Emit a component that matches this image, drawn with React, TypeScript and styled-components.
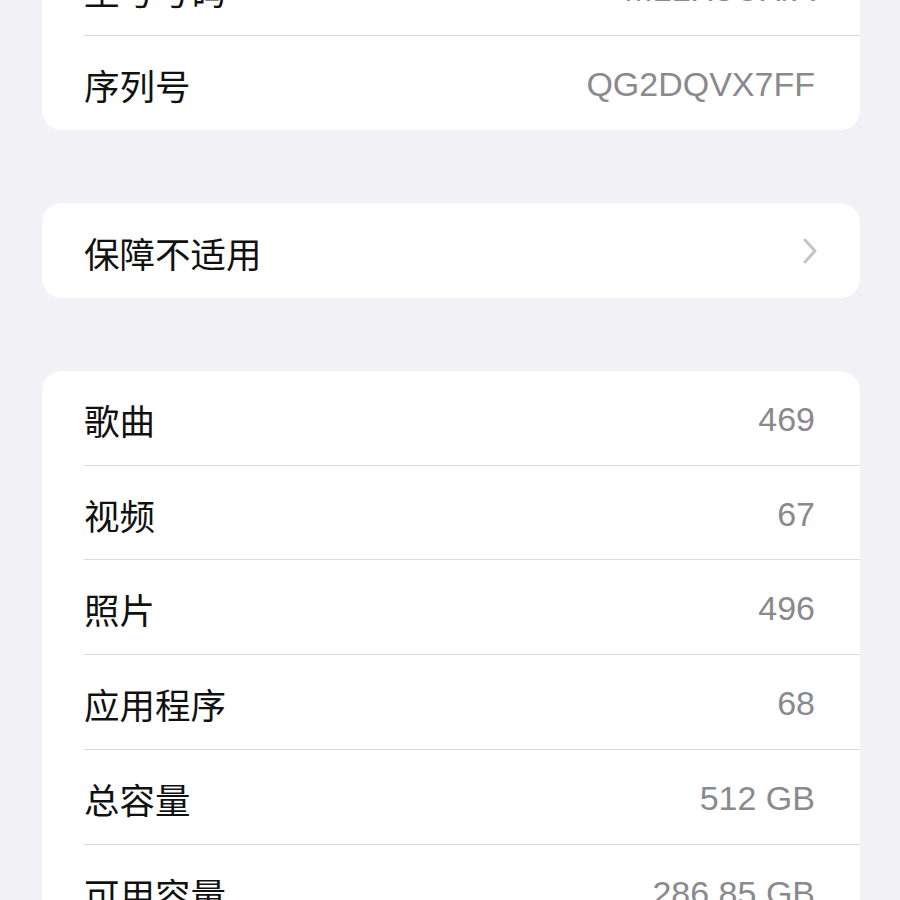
import React from 'react';
import styled, { createGlobalStyle } from 'styled-components';

const GlobalStyle = createGlobalStyle`
    html, body {
        margin: 0;
        padding: 0;
        background: #f2f1f6;
        overflow: hidden;
    }
`;

const Page = styled.div`
    width: 900px;
    height: 900px;
    overflow: hidden;
    background: #f2f1f6;
    font-family: 'Liberation Sans', 'Noto Sans CJK SC', sans-serif;
`;

const Scroll = styled.div`
    display: flex;
    flex-direction: column;
    gap: 73px;
    padding: 0 40px 0 42px;
    margin-top: -59px;
`;

const Card = styled.div`
    background: #ffffff;
    border-radius: 20px;
    overflow: hidden;
`;

const Row = styled.div<{ $last?: boolean }>`
    height: 94.7px;
    display: flex;
    align-items: center;
    justify-content: space-between;
    margin-left: 42px;
    padding: 3px 45px 0 0;
    box-sizing: border-box;
    border-bottom: ${p => (p.$last ? 'none' : '1.5px solid #d9d9dd')};
`;

const Label = styled.span`
    font-family: 'Noto Sans CJK SC', sans-serif;
    font-size: 35.5px;
    color: #111;
`;

const Value = styled.span`
    font-family: 'Liberation Sans', 'Noto Sans CJK SC', sans-serif;
    font-size: 34px;
    color: #8a8a8e;
`;

const Chevron = () => (
    <svg width="18" height="28" viewBox="0 0 18 28">
        <path d="M4 3 L14 14 L4 25" fill="none" stroke="#c4c4c7" strokeWidth="3" strokeLinecap="round" strokeLinejoin="round" />
    </svg>
);

const ChevronWrap = styled.span`
    display: flex;
    margin-right: -4px;
    margin-top: -3px;
`;

type Item = { label: string; value: string };

const device: Item[] = [
    { label: '型号号码', value: 'MLLH3CH/A' },
    { label: '序列号', value: 'QG2DQVX7FF' },
];

const media: Item[] = [
    { label: '歌曲', value: '469' },
    { label: '视频', value: '67' },
    { label: '照片', value: '496' },
    { label: '应用程序', value: '68' },
    { label: '总容量', value: '512 GB' },
    { label: '可用容量', value: '286.85 GB' },
];

const List = ({ items }: { items: Item[] }) => (
    <Card>
        {items.map((item, index) => (
            <Row key={index} $last={index === items.length - 1}>
                <Label>{item.label}</Label>
                <Value>{item.value}</Value>
            </Row>
        ))}
    </Card>
);

export default function App() {
    return (
        <Page>
            <GlobalStyle />
            <Scroll>
                <List items={device} />
                <Card>
                    <Row $last>
                        <Label>保障不适用</Label>
                        <ChevronWrap>
                            <Chevron />
                        </ChevronWrap>
                    </Row>
                </Card>
                <List items={media} />
            </Scroll>
        </Page>
    );
}
